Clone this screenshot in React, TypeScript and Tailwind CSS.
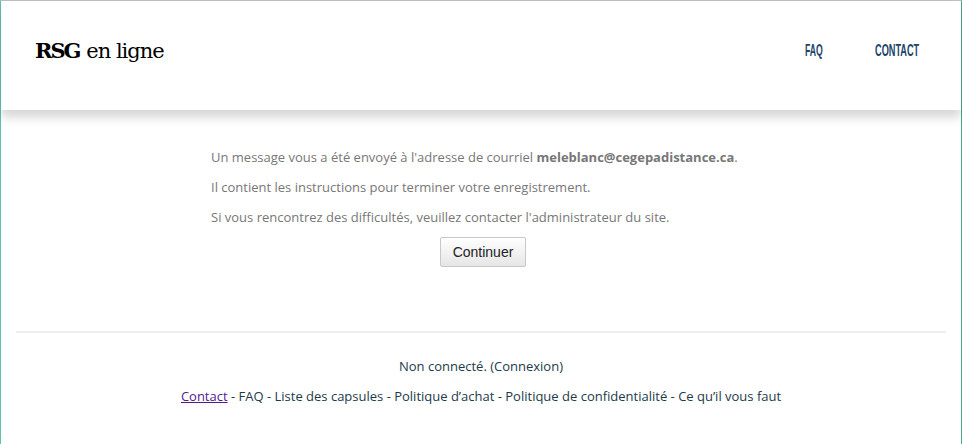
import React from "react";

const footerLinks = [
	"FAQ",
	"Liste des capsules",
	"Politique d\u2019achat",
	"Politique de confidentialité",
	"Ce qu\u2019il vous faut",
];

const App = () => {
	return (
		<div className="min-h-[444px] bg-white border-t border-t-[#c0c0c0] border-l border-l-[#5fc2b3] border-r border-r-[#4aa593] font-['Open_Sans',sans-serif]">
			<header className="h-[109px] flex items-center justify-between pl-[34px] pr-[41px] pb-[10px] shadow-[0_7px_10px_rgba(0,0,0,0.17)] relative">
				<div className="text-[21px] text-black font-['DejaVu_Serif',serif] leading-none">
					<span className="font-bold tracking-[-2px]">RSG</span> <span className="tracking-[-1px]">en ligne</span>
				</div>
				<nav className="flex gap-[52px] font-['Liberation_Sans',sans-serif] font-bold text-[17px] text-[#1b4468] leading-none">
					<a className="w-[18px] whitespace-nowrap">
						<span className="inline-block origin-left scale-x-[0.51]">FAQ</span>
					</a>
					<a className="w-[45px] whitespace-nowrap">
						<span className="inline-block origin-left scale-x-[0.54]">CONTACT</span>
					</a>
				</nav>
			</header>

			<main className="w-[540px] mx-auto pt-[37px] text-[13px] text-[#777] leading-[20px]">
				<p className="mb-[10px]">
					Un message vous a été envoyé à l'adresse de courriel <b className="font-bold">meleblanc@cegepadistance.ca</b>.
				</p>
				<p className="mb-[10px]">Il contient les instructions pour terminer votre enregistrement.</p>
				<p className="mb-[10px]">Si vous rencontrez des difficultés, veuillez contacter l'administrateur du site.</p>
				<div className="flex justify-center">
					<button className="h-[30px] px-[12px] ml-[4px] border border-[#c8c8c8] rounded-[2px] bg-gradient-to-b from-white to-[#e6e6e6] text-[14px] text-[#222] font-['Liberation_Sans',sans-serif]">
						Continuer
					</button>
				</div>
			</main>

			<footer className="mt-[64px] mx-[15px] border-t-2 border-[#eee] pt-[23px] text-center text-[13px] text-[#1c3a4a] leading-[20px]">
				<p className="mb-[10px]">Non connecté. (Connexion)</p>
				<p>
					<a className="underline text-[#551a8b]">Contact</a>
					{footerLinks.map((l) => (
						<span key={l}> - {l}</span>
					))}
				</p>
			</footer>
		</div>
	);
};

export default App;
